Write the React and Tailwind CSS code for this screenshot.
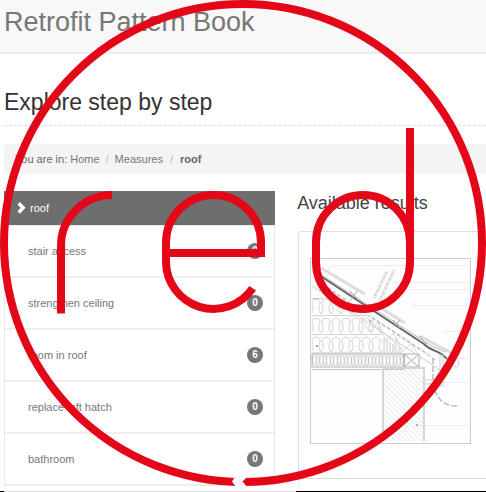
import React from 'react';

const measures = [
  { name: 'stair access', count: 0 },
  { name: 'strengthen ceiling', count: 0 },
  { name: 'room in roof', count: 6 },
  { name: 'replace loft hatch', count: 0 },
  { name: 'bathroom', count: 0 },
];

function App() {
  return (
    <div className="relative flex min-h-screen flex-col overflow-hidden bg-white font-['Liberation_Sans',Arial,sans-serif] text-[11px] leading-4 text-[#777]">
      <header className="border-b-2 border-[#eee] bg-[#f8f8f8] pt-[2px] pb-[10px] pl-1">
        <h1 className="text-[27px] leading-10 whitespace-nowrap">Retrofit Pattern Book</h1>
      </header>

      <main className="flex flex-1 flex-col pl-1">
        <h2 className="mt-8 border-b border-dashed border-[#ddd] pb-[7px] text-[23px] leading-8 text-[#333]">
          Explore step by step
        </h2>
        <Breadcrumb />
        <div className="mt-[17px] flex flex-1 items-stretch">
          <MeasureList />
          <Results />
        </div>
      </main>

      <footer className="flex h-px">
        <div className="w-1 bg-black" />
        <div className="w-3/5 bg-[#ddd]" />
        <div className="flex-1 bg-black" />
      </footer>

      <RedLogo />
    </div>
  );
}

function Breadcrumb() {
  return (
    <nav aria-label="Breadcrumb" className="mt-[18px] rounded-l-sm bg-[#f4f4f4] py-[7px] pl-[11px]">
      <ol className="flex whitespace-nowrap">
        <li className="mr-[3px] text-[#666]">You are in:</li>
        <li><a href="#home">Home</a></li>
        <li className="px-[6px] text-[#bbb]">/</li>
        <li><a href="#measures">Measures</a></li>
        <li className="px-[7px] text-[#bbb]">/</li>
        <li className="font-bold text-[#666]">roof</li>
      </ol>
    </nav>
  );
}

function MeasureList() {
  return (
    <section className="w-9/16 shrink-0">
      <a href="#roof" className="flex h-[34px] items-center bg-[#6e6e6e] pl-3 text-white">
        <svg viewBox="0 0 10 14" className="mr-1 h-[14px] w-[10px]" aria-hidden="true">
          <path d="M1.5 3.5 L4 1 L9.5 6.8 L4 12.8 L1.5 10.3 L4.6 6.8 Z" fill="#fff" />
        </svg>
        roof
      </a>
      <ul className="border-x border-t border-[#e8e8e8]">
        {measures.map((m) => (
          <li key={m.name} className="border-b-2 border-[#eee]">
            <a href="#measure" className="flex h-[50px] items-center justify-between pr-[11px] pl-[23px]">
              {m.name}
              <span className="flex size-4 items-center justify-center rounded-full bg-[#777] text-[10px] font-bold text-white">
                {m.count}
              </span>
            </a>
          </li>
        ))}
      </ul>
    </section>
  );
}

function Results() {
  return (
    <section className="ml-[22px] flex min-w-0 flex-1 flex-col">
      <h3 className="text-lg leading-6 whitespace-nowrap text-[#444]">Available results</h3>
      <a href="#detail" className="mt-4 ml-px block rounded-tl-sm border-y border-l border-[#ddd] pt-[26px] pb-[34px] pl-[11px]">
        <RoofDetail />
      </a>
      <div className="ml-px flex-1 border-l border-[#eee]" />
    </section>
  );
}

function RoofDetail() {
  return (
    <svg viewBox="310 258 162 186" className="h-[186px] w-[162px]" fill="none" stroke="#c8c8c8" role="img" aria-label="Roof eaves section">
      <defs>
        <pattern id="loops" width="10" height="19" x="311" y="297" patternUnits="userSpaceOnUse">
          <path d="M0 17 C4 12 1 9 1 6 C1 1 9 1 9 6 C9 9 6 12 10 17 M0 18.500 H10" strokeWidth="0.8" />
        </pattern>
        <pattern id="thin" width="7" height="13" x="311" y="354" patternUnits="userSpaceOnUse">
          <path d="M0 12 C2 12 1 1 3.500 1 C6 1 5 12 7 12 M0 1 C2 1 1 12 3.500 12 C6 12 5 1 7 1" stroke="#bbb" strokeWidth="0.7" />
        </pattern>
        <pattern id="hatch" width="5" height="5" patternUnits="userSpaceOnUse">
          <path d="M0 0 L5 5" stroke="#e2e2e2" strokeWidth="0.8" />
        </pattern>
      </defs>
      <rect x="310.5" y="258.5" width="160" height="185" fill="#fdfdfd" stroke="#ccc" />

      <g stroke="#ececec">
        <path d="M328 271 L332 265.500 H468 M392 282.500 H468 M396 289.500 H468 M412 305.500 H468 M444 331.500 H468" />
        <path d="M448 346.500 H468 M450 358.500 H468 M424 382.500 H468 M417 425.500 H468" />
      </g>

      <path d="M312 297 H338 L382 325 V352 H312 Z" fill="url(#loops)" stroke="none" />
      <path d="M312 298.500 H324" />
      <rect x="312" y="354" width="92" height="13" fill="url(#thin)" stroke="#b8b8b8" />
      <path d="M312 353 H402 M312 369.500 H405" stroke="#c4c4c4" />
      <path d="M404 354 H419 V367 H404 Z M404 354 L419 367 M419 354 L404 367" stroke="#aaa" />
      <path d="M384 338 V352 M387 340 V352 M390 342 V352 M393 344 V352 M396 346 V352 M399 348 V352" stroke="#ccc" />

      {/* rafter and roof covering */}
      <path d="M312 286 L425 360 L440 370" stroke="#d0d0d0" />
      <path d="M322 285 L437 361 M318 281 L350 302 M372 317 L428 354" stroke="#bbb" strokeDasharray="4 2" />
      <path d="M361 318 L370 332 L378 322 L386 341 L394 333 L402 352 L411 344 L421 359 M371 322 L403 350 M397 338 L393 352" stroke="#d0d0d0" strokeWidth="0.8" />
      <path d="M321 268 L365 294 M373 303 L405 323 M420 336 L457 356" stroke="#dcdcdc" strokeWidth="3" />
      <path d="M320 274 L430 345 L445 352" stroke="#bbb" />
      <path d="M322 277 L424 344 C432 352 440 350 447 359" stroke="#666" strokeWidth="2" />
      <path d="M350 291 L358 300 M357 291 L351 300 M393 320 L400 328 M400 320 L393 327 M419 336 L427 344" stroke="#aaa" />
      <path d="M440 354 V386 H443 V353 M452 353 C462 361 460 370 453 366 M424 380 H440 M424 384 H440" stroke="#ccc" />
      <path d="M433 358 V382 C435 398 444 407 458 406" stroke="#bbb" strokeWidth="1.5" strokeDasharray="6 2" />
      <path d="M374 298 L387 271 M380 300 L394 270" stroke="#d0d0d0" strokeWidth="3" strokeDasharray="1 1 2 1" />

      {/* wall */}
      <rect x="383" y="368" width="41" height="73" fill="url(#hatch)" stroke="none" />
      <path d="M383 441 V368 H424 V441" strokeWidth="2" stroke="#d6d6d6" />
      <circle cx="417" cy="425" r="1" fill="#999" stroke="none" />
      <circle cx="317" cy="346" r="1" fill="#888" stroke="none" />
      <circle cx="370" cy="321" r="1" fill="#999" stroke="none" />
    </svg>
  );
}

function RedLogo() {
  return (
    <svg viewBox="0 0 486 492" className="pointer-events-none absolute inset-x-0 top-0 w-full" fill="none" stroke="#e30718" strokeWidth="8" role="img" aria-label="red">
      <circle cx="243" cy="243" r="239" />
      <path d="M235 477 L232 481.500 L236 487 H247 L243 481.500 L247 477 Z" fill="#fff" stroke="none" />
      <path d="M247 477.500 L242.500 481.500 L247 486 Z" fill="#e30718" stroke="none" />
      <path d="M61 313.500 V246 A51 51 0 0 1 112 195" />
      <path d="M166 253 H261 V242.500 A47.500 47.500 0 0 0 166 242.500 V261.500 A47.500 47.500 0 0 0 252.700 288.300" />
      <path d="M410 128 V262 A47 47 0 0 1 316 262 V242 A47 47 0 0 1 410 242" />
    </svg>
  );
}

export default App;
